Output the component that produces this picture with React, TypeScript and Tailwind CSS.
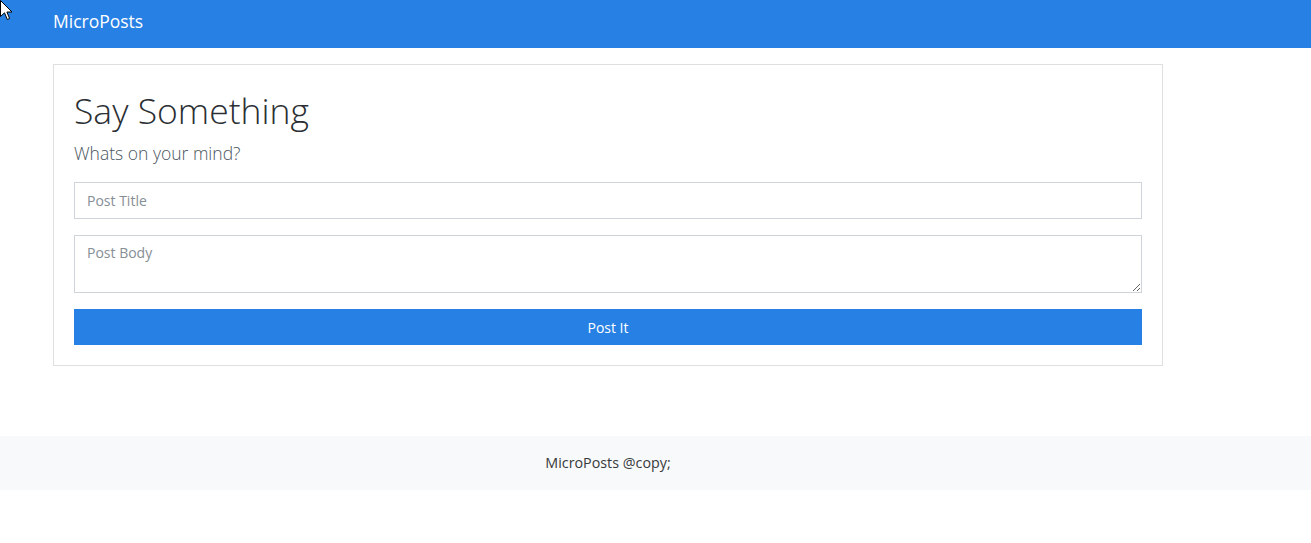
import React from "react";

const font = { fontFamily: '"Open Sans", "Noto Sans", sans-serif' };

function Cursor() {
  return (
    <svg className="absolute left-0 top-0" width="13" height="21" viewBox="0 0 13 21">
      <path d="M0.5 0.5 L0.5 16.5 L4.5 12.8 L7.3 19.5 L9.6 18.5 L6.9 12 L12 12 Z" fill="#fff" stroke="#000" strokeWidth="1" />
    </svg>
  );
}

export default function App() {
  return (
    <div className="relative min-h-[543px] bg-white text-[#373a3c]" style={font}>
      <Cursor />
      <nav className="h-12 bg-[#2780e3]">
        <div className="ml-[38px] flex h-full w-[1140px] items-center px-[15px] pb-[6px]">
          <span className="text-[17.5px] text-white">MicroPosts</span>
        </div>
      </nav>

      <div className="ml-[38px] w-[1140px] px-[15px] pt-4">
        <div className="border border-[#dfdfdf] p-5">
          <h1 className="text-[35.5px] leading-[50px] font-light text-[#2b2f33]">Say Something</h1>
          <p className="mt-[6px] text-[17.5px] leading-6 font-light text-[#4a5560]">Whats on your mind?</p>
          <form className="mt-[17px] flex flex-col gap-4" onSubmit={(e) => e.preventDefault()}>
            <input
              type="text"
              placeholder="Post Title"
              className="h-[37px] w-full border border-[#ced4da] px-3 text-[14px] text-[#495057] placeholder:text-[#868e96] outline-none"
            />
            <textarea
              placeholder="Post Body"
              className="block h-[58px] w-full border border-[#ced4da] px-3 py-[6px] text-[14px] text-[#495057] placeholder:text-[#868e96] outline-none"
            />
            <button type="submit" className="h-9 w-full bg-[#2780e3] text-[14px] text-white">
              Post It
            </button>
          </form>
        </div>
      </div>

      <footer className="mt-[70px] flex h-[54px] items-center bg-[#f8f9fa]">
        <div className="w-[1216px] text-center text-[14.3px] text-[#373a3c]">MicroPosts @copy;</div>
      </footer>
    </div>
  );
}
